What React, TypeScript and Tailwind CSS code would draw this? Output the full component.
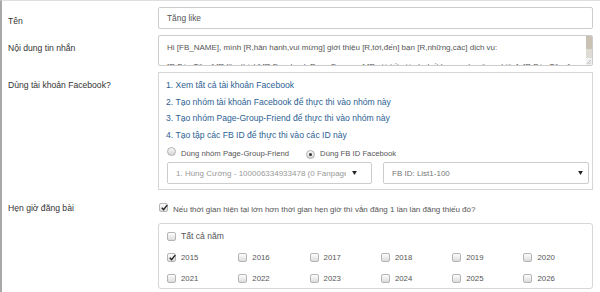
const YEARS = [2015, 2016, 2017, 2018, 2019, 2020, 2021, 2022, 2023, 2024, 2025, 2026]

const LINKS = [
  '1. Xem tất cả tài khoản Facebook',
  '2. Tạo nhóm tài khoản Facebook để thực thi vào nhóm này',
  '3. Tạo nhóm Page-Group-Friend để thực thi vào nhóm này',
  '4. Tạo tập các FB ID để thực thi vào các ID này',
]

function Checkbox({ checked }: { checked?: boolean }) {
  return (
    <span className="relative inline-block w-[9px] h-[9px] shrink-0 rounded-[2px] border border-[#b5b5b5] bg-gradient-to-b from-[#fdfdfd] to-[#dcdcdc]">
      {checked && (
        <svg viewBox="0 0 10 10" className="absolute left-[0px] top-[-1px] w-[9px] h-[9px]">
          <path d="M2 5.2 L4 7.4 L8 2.4" fill="none" stroke="#222" strokeWidth="1.6" />
        </svg>
      )}
    </span>
  )
}

function Radio({ checked }: { checked?: boolean }) {
  return (
    <span className="relative inline-flex items-center justify-center w-[9px] h-[9px] shrink-0 rounded-full border border-[#b0b0b0] bg-gradient-to-b from-[#fafafa] to-[#d6d6d6]">
      {checked && <span className="w-[3px] h-[3px] rounded-full bg-[#333]" />}
    </span>
  )
}

function Select({ text, className }: { text: string; className: string }) {
  return (
    <div className={`flex items-center h-[22px] border border-[#ccc] rounded-[2px] bg-white pl-[8px] text-[8px] ${className}`}>
      <span className="flex-1 overflow-hidden whitespace-nowrap">{text}</span>
      <svg viewBox="0 0 6 5" className="w-[5px] h-[4px] shrink-0 ml-[6px]">
        <path d="M0 0 L6 0 L3 5 Z" fill="#222" />
      </svg>
    </div>
  )
}

export default function App() {
  return (
    <div
      className="w-[600px] h-[292px] overflow-hidden bg-white border-t border-[#dedede] border-l-2 border-l-[#a8a8a8] text-[8.6px] text-[#333] leading-[13px]"
      style={{ fontFamily: '"Liberation Sans", Arial, sans-serif' }}
    >
      <div className="grid grid-cols-[156px_435px] pt-[6px]">
        {/* Tên */}
        <div className="pl-[6px] pt-[8px]">Tên</div>
        <div className="h-[22px] border border-[#ccc] rounded-[2px] flex items-center pl-[8px] text-[#555] text-[8.4px]">Tăng like</div>

        {/* Nội dung */}
        <div className="pl-[6px] pt-[7px] mt-[6px]">Nội dung tin nhắn</div>
        <div className="relative mt-[6px] h-[31px] border border-[#ccc] rounded-[2px] overflow-hidden pl-[8px] pr-[10px] pt-[2px] text-[#555] text-[8px] leading-[19px]">
          <div className="whitespace-nowrap">Hi [FB_NAME], mình [R,hân hạnh,vui mừng] giới thiệu [R,tới,đến] bạn [R,những,các] dịch vụ:</div>
          <div className="whitespace-nowrap">[R,Bán Tăng] [R,like,thích] [R,Facebook,Page,Fanpage] [R,giá tốt,giá rẻ,chất lượng,chuyên nghiệp]. [R,Bán Tăng]</div>
          <div className="absolute right-0 top-0 w-[6px] h-[29px] bg-[#f1f1f1]">
            <div className="h-[13px] bg-[#c9c2b4]" />
            <div className="h-[9px] bg-[#dedbd4]" />
          </div>
          <svg viewBox="0 0 6 6" className="absolute right-[1px] bottom-[1px] w-[5px] h-[5px]">
            <path d="M6 1 L1 6 M6 4 L4 6" stroke="#999" strokeWidth="0.8" />
          </svg>
        </div>

        {/* Facebook */}
        <div className="pl-[6px] pt-[7px] mt-[6px]">Dùng tài khoản Facebook?</div>
        <div className="mt-[6px] h-[118px] border border-[#d6d6d6] pl-[7px] pt-[4px]">
          {LINKS.map((l) => (
            <div key={l} className="h-[16.5px] leading-[16.5px] text-[#2d6293] whitespace-nowrap">{l}</div>
          ))}
          <div className="flex items-center h-[14px] mt-[3px] text-[#555] text-[7.7px]">
            <span className="ml-[1px]"><Radio /></span>
            <span className="ml-[5px]">Dùng nhóm Page-Group-Friend</span>
            <span className="ml-[17px]"><Radio checked /></span>
            <span className="ml-[5px]">Dùng FB ID Facebook</span>
          </div>
          <div className="flex gap-[11px] mt-[2px] pl-[1px]">
            <Select text="1. Hùng Cường - 100006334933478 (0 Fanpage)" className="w-[205px] pr-[14px] text-[#999]" />
            <Select text="FB ID: List1-100" className="w-[206px] pr-[5px] text-[#777]" />
          </div>
        </div>

        {/* Hẹn giờ */}
        <div className="pl-[6px] pt-[6px] mt-[6px]">Hẹn giờ đăng bài</div>
        <div className="mt-[6px]">
          <div className="flex items-center h-[23px] pt-[3px] text-[#555] text-[8px]">
            <span className="ml-[1px]"><Checkbox checked /></span>
            <span className="ml-[5px]">Nếu thời gian hiện tại lớn hơn thời gian hẹn giờ thì vẫn đăng 1 lần lần đăng thiếu đó?</span>
          </div>
          <div className="mt-[4px] h-[66px] border border-[#d6d6d6] rounded-[3px] pl-[8px] pt-[2px] text-[#555]">
            <div className="flex items-center h-[21px]">
              <Checkbox />
              <span className="ml-[5px]">Tất cả năm</span>
            </div>
            <div className="grid grid-cols-[repeat(6,71.3px)] text-[7.8px]">
              {YEARS.map((y) => (
                <div key={y} className="flex items-center h-[21px]">
                  <Checkbox checked={y === 2015} />
                  <span className="ml-[5px]">{y}</span>
                </div>
              ))}
            </div>
          </div>
        </div>
      </div>
    </div>
  )
}
